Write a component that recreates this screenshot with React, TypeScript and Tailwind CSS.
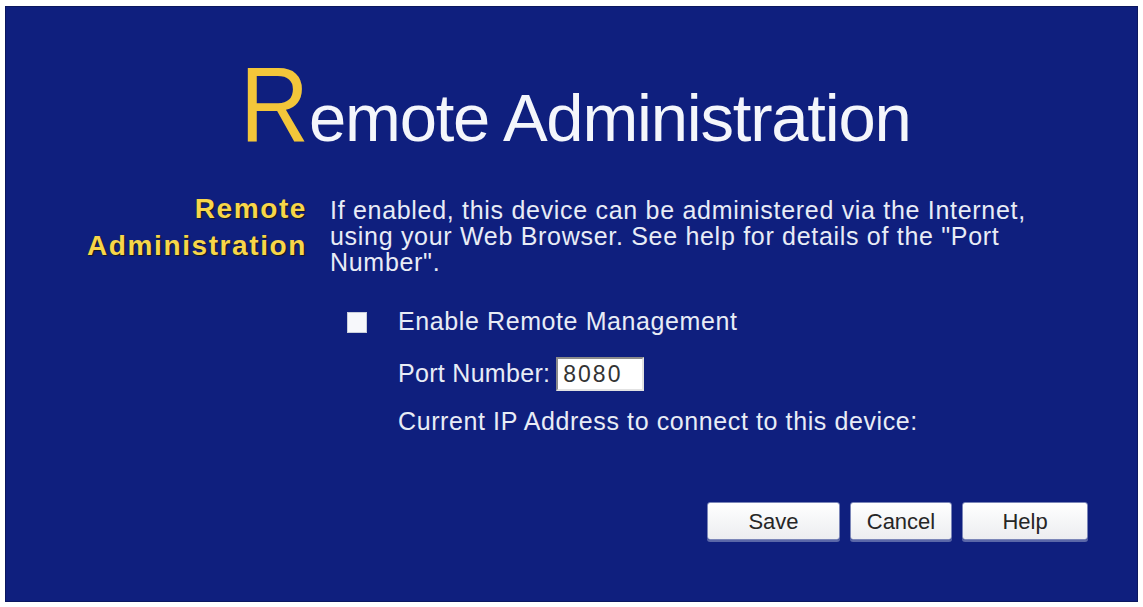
export default function App() {
  const font = { fontFamily: '"Liberation Sans", Arial, Helvetica, sans-serif' };
  return (
    <div className="h-screen w-full bg-white pl-[5px] pr-[5px] pt-[6px] pb-[5px]" style={font}>
      <div className="flex h-full flex-col bg-[#0f1f7e] border border-[#0b175f]">
        {/* page title */}
        <div className="mt-[44px] flex h-[106px] items-baseline justify-center pl-[8px]">
          <span className="inline-block origin-left scale-x-[0.9] text-[106px] leading-none tracking-[-8px] text-[#f3c63a]">R</span>
          <span className="text-[67px] leading-none tracking-[-1.2px] text-[#f4f6fb]">emote Administration</span>
        </div>

        <div className="mt-[33px] flex">
          <div className="w-[301px] shrink-0 text-right text-[28px] font-bold leading-[37px] tracking-[1.6px] text-[#f7d64a] [text-shadow:1px_1px_1px_#1a1a1a]">
            Remote
            <br />
            Administration
          </div>

          <div className="ml-[23px] pt-[7px] text-[#e8ecf6]">
            <p className="text-[25px] leading-[26px] tracking-[0.7px] whitespace-nowrap">
              If enabled, this device can be administered via the Internet,
              <br />
              using your Web Browser. See help for details of the "Port
              <br />
              Number".
            </p>

            <div className="mt-[28px] flex h-[38px] items-center pl-[17px]">
              <span className="h-[21px] w-[20px] border border-[#c9cedb] bg-[#f7f8fb]" />
              <span className="ml-[31px] text-[25px] tracking-[0.6px]">Enable Remote Management</span>
            </div>

            <div className="mt-[14px] flex h-[38px] items-center pl-[68px]">
              <span className="text-[25px] tracking-[0.3px]">Port Number:</span>
              <input
                defaultValue="8080"
                className="ml-[6px] h-[34px] w-[88px] border-2 border-t-[#8c8c8c] border-l-[#8c8c8c] border-b-[#e2e2e2] border-r-[#e2e2e2] bg-white px-[5px] text-[23px] tracking-[2px] text-[#333] outline-none"
                style={font}
              />
            </div>

            <div className="mt-[10px] flex h-[38px] items-center pl-[68px]">
              <span className="text-[25px] tracking-[0.6px]">Current IP Address to connect to this device:</span>
            </div>
          </div>
        </div>

        <div className="mt-[61px] flex justify-end gap-[10px] pr-[49px]">
          {[
            { label: "Save", w: "w-[133px]" },
            { label: "Cancel", w: "w-[102px]" },
            { label: "Help", w: "w-[126px]" },
          ].map((b) => (
            <button
              key={b.label}
              className={`${b.w} h-[38px] rounded-[3px] border border-[#7b86b8] bg-gradient-to-b from-white to-[#ecedf0] text-[22px] text-[#262626] shadow-[0_2px_0_#5a67a8]`}
              style={font}
            >
              {b.label}
            </button>
          ))}
        </div>
      </div>
    </div>
  );
}
